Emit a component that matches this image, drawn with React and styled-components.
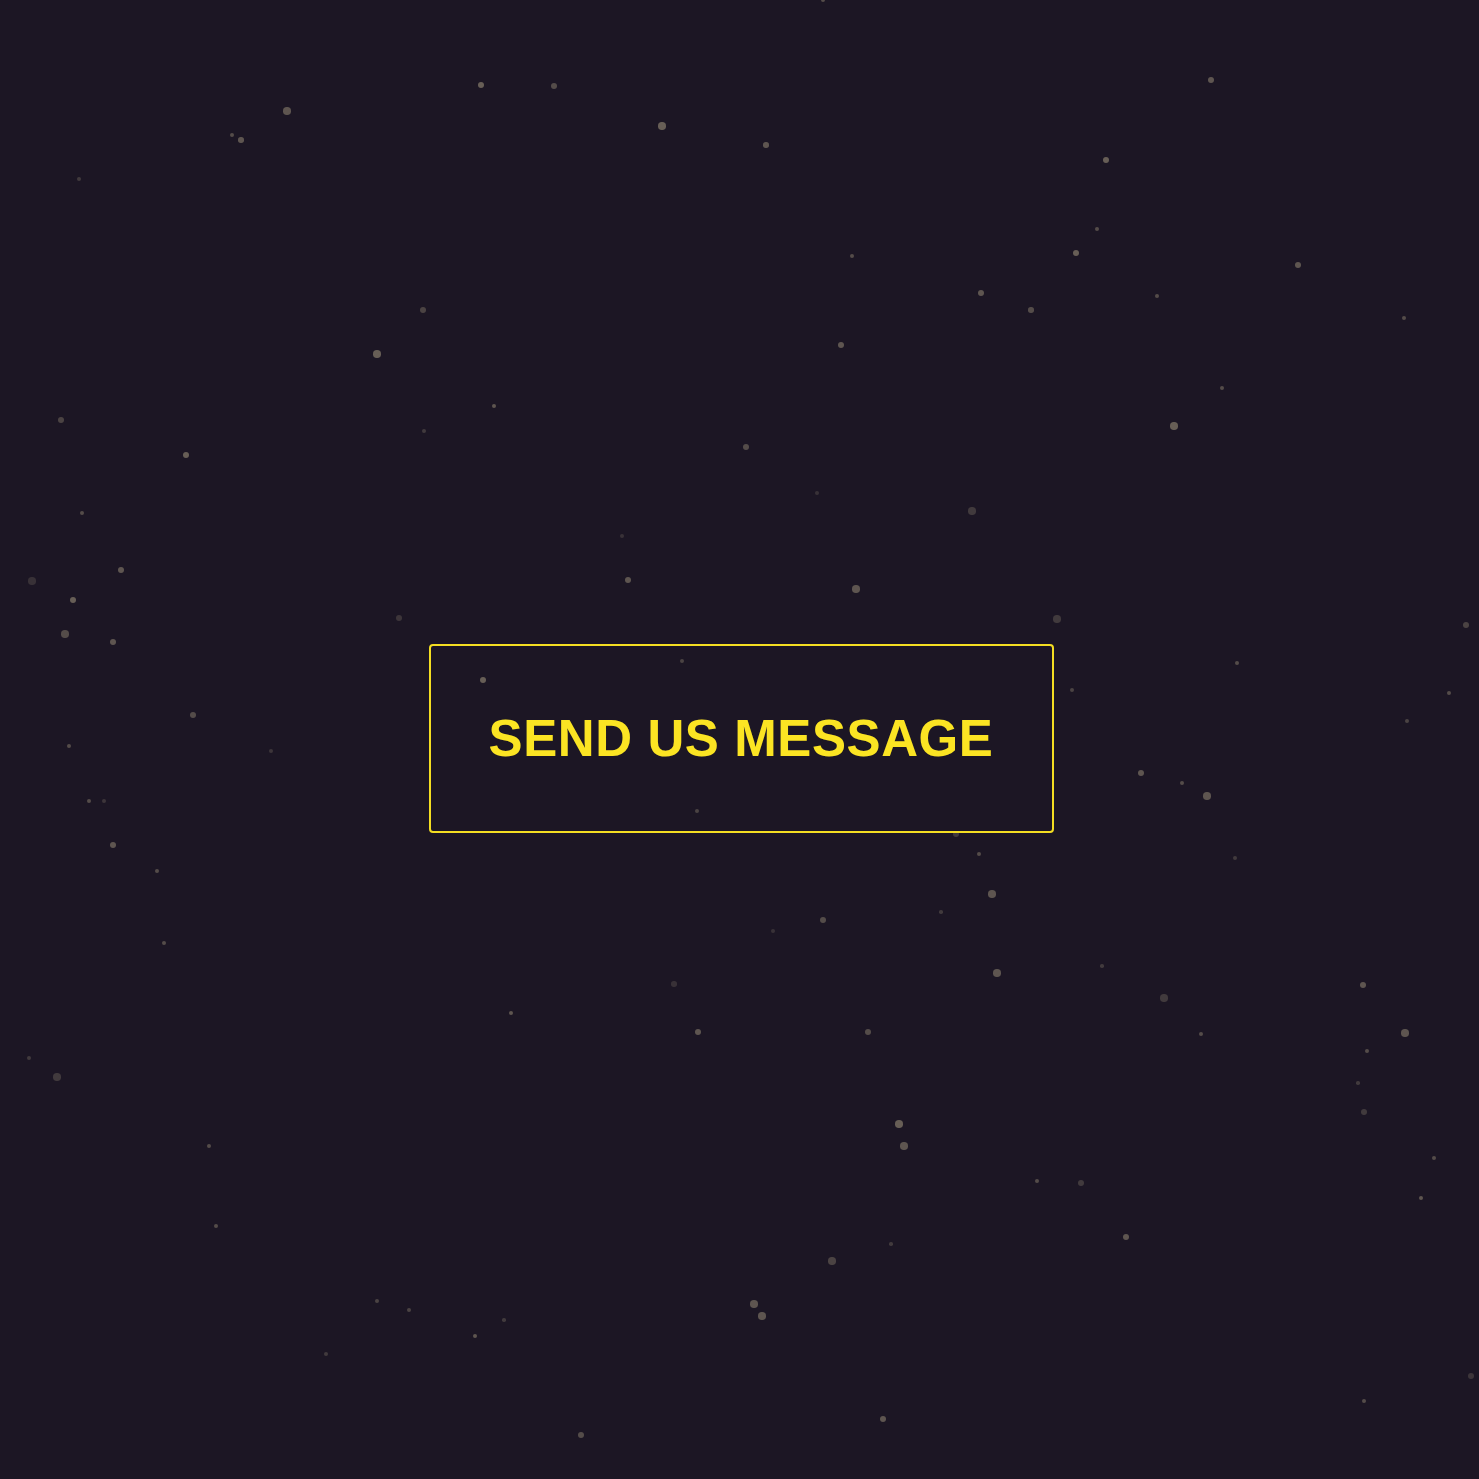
import React from "react";
import styled, { createGlobalStyle } from "styled-components";

// [x, y, size, opacity]
const stars = [
  [823, 0, 3, 0.6], [481, 85, 5, 0.8], [554, 86, 5, 0.6], [287, 111, 6, 0.7],
  [662, 126, 6, 0.8], [232, 135, 3, 0.6], [241, 140, 4, 0.7], [766, 145, 4, 0.7],
  [1211, 80, 5, 0.7], [1106, 160, 5, 0.8], [79, 179, 3, 0.4], [1097, 229, 3, 0.6],
  [1076, 253, 5, 0.8], [852, 256, 3, 0.6], [1298, 265, 5, 0.7], [981, 293, 5, 0.7],
  [1157, 296, 3, 0.6], [1031, 310, 4, 0.6], [423, 310, 5, 0.5], [1404, 318, 3, 0.6],
  [377, 354, 6, 0.8], [841, 345, 5, 0.7], [1222, 388, 3, 0.6], [494, 406, 3, 0.7],
  [61, 420, 5, 0.5], [424, 431, 3, 0.4], [1174, 426, 6, 0.8], [746, 447, 5, 0.6],
  [186, 455, 5, 0.8], [817, 493, 3, 0.3], [972, 511, 6, 0.4], [82, 513, 3, 0.6],
  [622, 536, 3, 0.3], [121, 570, 5, 0.7], [628, 580, 5, 0.7], [32, 581, 6, 0.3],
  [856, 589, 6, 0.7], [73, 600, 5, 0.8], [1057, 619, 6, 0.4], [399, 618, 5, 0.35],
  [65, 634, 6, 0.6], [113, 642, 5, 0.7], [1466, 625, 5, 0.5], [682, 661, 3, 0.5],
  [1237, 663, 3, 0.6], [483, 680, 5, 0.8], [1072, 690, 3, 0.5], [1449, 693, 3, 0.6],
  [193, 715, 5, 0.6], [1407, 721, 3, 0.5], [69, 746, 3, 0.6], [271, 751, 3, 0.35],
  [1141, 773, 5, 0.7], [1182, 783, 3, 0.6], [89, 801, 3, 0.6], [104, 801, 3, 0.35],
  [1207, 796, 6, 0.7], [697, 811, 3, 0.5], [113, 845, 5, 0.7], [956, 834, 5, 0.4],
  [979, 854, 3, 0.6], [1235, 858, 3, 0.4], [157, 871, 3, 0.6], [992, 894, 6, 0.7],
  [941, 912, 2, 0.4], [823, 920, 5, 0.6], [164, 943, 3, 0.6], [773, 931, 3, 0.3],
  [1102, 966, 2, 0.4], [997, 973, 6, 0.7], [674, 984, 4, 0.3], [1363, 985, 5, 0.7],
  [1164, 998, 6, 0.4], [511, 1013, 3, 0.7], [698, 1032, 5, 0.7], [868, 1032, 5, 0.6],
  [1201, 1034, 3, 0.6], [1405, 1033, 6, 0.7], [1367, 1051, 3, 0.6], [29, 1058, 3, 0.4],
  [57, 1077, 6, 0.4], [1358, 1083, 2, 0.4], [1364, 1112, 5, 0.4], [899, 1124, 6, 0.8],
  [904, 1146, 6, 0.7], [209, 1146, 3, 0.6], [1434, 1158, 3, 0.6], [1037, 1181, 3, 0.6],
  [1081, 1183, 5, 0.4], [1421, 1198, 3, 0.7], [216, 1226, 3, 0.6], [1126, 1237, 5, 0.7],
  [891, 1244, 2, 0.4], [832, 1261, 6, 0.5], [377, 1301, 3, 0.5], [754, 1304, 6, 0.7],
  [762, 1316, 6, 0.7], [409, 1310, 3, 0.5], [504, 1320, 2, 0.4], [475, 1336, 3, 0.7],
  [326, 1354, 3, 0.4], [1471, 1376, 5, 0.35], [1364, 1401, 3, 0.6], [883, 1419, 5, 0.7],
  [581, 1435, 5, 0.6],
];

const App = () => {
  return (
    <>
      <GlobalStyle />
      <Page>
        <Sky aria-hidden="true">
          {stars.map(([x, y, s, o], i) => (
            <Star key={i} $x={x} $y={y} $s={s + 1.5} $o={o} />
          ))}
        </Sky>
        <SendButton type="button">SEND US MESSAGE</SendButton>
      </Page>
    </>
  );
};

const GlobalStyle = createGlobalStyle`
  html, body {
    margin: 0;
    padding: 0;
    background: #1c1624;
  }
  * {
    box-sizing: border-box;
  }
`;

const Page = styled.main`
  position: relative;
  min-height: 100vh;
  display: flex;
  align-items: center;
  justify-content: center;
  overflow: hidden;
  background: #1c1624;
`;

const Sky = styled.div`
  position: absolute;
  inset: 0;
  pointer-events: none;
`;

const Star = styled.span`
  position: absolute;
  left: ${(p) => p.$x - p.$s / 2}px;
  top: ${(p) => p.$y - p.$s / 2}px;
  width: ${(p) => p.$s}px;
  height: ${(p) => p.$s}px;
  border-radius: 50%;
  background: #7a7163;
  opacity: ${(p) => p.$o};
  filter: blur(0.4px);
`;

const SendButton = styled.button`
  position: relative;
  width: 625px;
  height: 189px;
  margin: -2px 0 0 3px;
  display: flex;
  align-items: center;
  justify-content: center;
  background: transparent;
  border: 2px solid #f3dd22;
  border-radius: 4px;
  color: #fbe423;
  font-family: "Liberation Sans", Arial, sans-serif;
  font-weight: 700;
  font-size: 51px;
  letter-spacing: 0.6px;
  padding: 0;
  cursor: pointer;
`;

export default App;
